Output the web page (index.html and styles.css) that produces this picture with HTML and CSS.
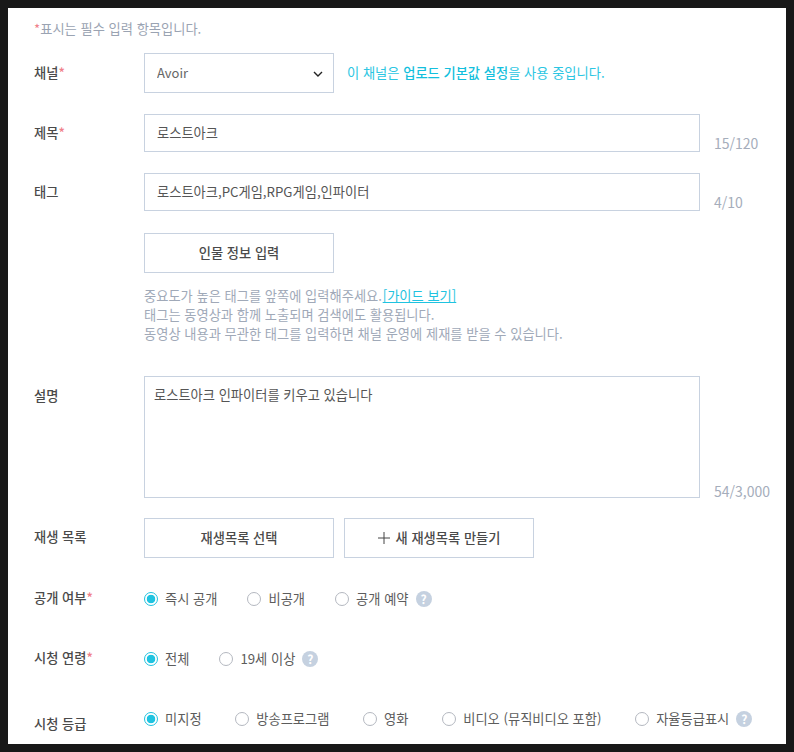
FILE: index.html
```html
<!DOCTYPE html>
<html lang="ko">
<head>
<meta charset="utf-8">
<title>동영상 업로드</title>
<link rel="stylesheet" href="styles.css">
</head>
<body>
<main class="panel">
  <p class="note"><span class="star">*</span>표시는 필수 입력 항목입니다.</p>

  <div class="row row-channel">
    <div class="label">채널<span class="star">*</span></div>
    <div class="select-wrap">
      <select class="select"><option>Avoir</option></select>
      <svg class="chevron" viewBox="0 0 10 6" aria-hidden="true"><path d="M1 1l4 4 4-4" fill="none" stroke="#222" stroke-width="1.4"/></svg>
    </div>
    <p class="channel-note">이 채널은 <strong class="strong">업로드 기본값 설정</strong>을 사용 중입니다.</p>
  </div>

  <div class="row row-title">
    <div class="label">제목<span class="star">*</span></div>
    <input class="input" type="text" value="로스트아크">
    <span class="count">15/120</span>
  </div>

  <div class="row row-tag">
    <div class="label">태그</div>
    <input class="input" type="text" value="로스트아크,PC게임,RPG게임,인파이터">
    <span class="count">4/10</span>
  </div>

  <div class="row row-person">
    <div class="label"></div>
    <button class="btn" type="button">인물 정보 입력</button>
  </div>

  <div class="row row-help">
    <div class="label"></div>
    <p class="help">중요도가 높은 태그를 앞쪽에 입력해주세요. <a class="link" href="#">[가이드 보기]</a><br>태그는 동영상과 함께 노출되며 검색에도 활용됩니다.<br>동영상 내용과 무관한 태그를 입력하면 채널 운영에 제재를 받을 수 있습니다.</p>
  </div>

  <div class="row row-desc">
    <div class="label label-desc">설명</div>
    <textarea class="textarea">로스트아크 인파이터를 키우고 있습니다</textarea>
    <span class="count count-desc">54/3,000</span>
  </div>

  <div class="row row-list">
    <div class="label label-up">재생 목록</div>
    <div class="btn-group">
      <button class="btn" type="button">재생목록 선택</button>
      <button class="btn" type="button"><svg class="plus" viewBox="0 0 12 12" aria-hidden="true"><path d="M6 0v12M0 6h12" stroke="#444" stroke-width="1"/></svg>새 재생목록 만들기</button>
    </div>
  </div>

  <div class="row row-radio">
    <div class="label label-up">공개 여부<span class="star">*</span></div>
    <div class="radios">
      <label class="radio"><input class="radio-input" type="radio" name="open" checked><span class="radio-text">즉시 공개</span></label>
      <label class="radio"><input class="radio-input" type="radio" name="open"><span class="radio-text">비공개</span></label>
      <label class="radio"><input class="radio-input" type="radio" name="open"><span class="radio-text">공개 예약</span><span class="help-icon">?</span></label>
    </div>
  </div>

  <div class="row row-radio">
    <div class="label label-up">시청 연령<span class="star">*</span></div>
    <div class="radios">
      <label class="radio"><input class="radio-input" type="radio" name="age" checked><span class="radio-text">전체</span></label>
      <label class="radio"><input class="radio-input" type="radio" name="age"><span class="radio-text">19세 이상</span><span class="help-icon">?</span></label>
    </div>
  </div>

  <div class="row row-radio row-rating">
    <div class="label label-rating">시청 등급</div>
    <div class="radios radios-wide">
      <label class="radio"><input class="radio-input" type="radio" name="rate" checked><span class="radio-text">미지정</span></label>
      <label class="radio"><input class="radio-input" type="radio" name="rate"><span class="radio-text">방송프로그램</span></label>
      <label class="radio"><input class="radio-input" type="radio" name="rate"><span class="radio-text">영화</span></label>
      <label class="radio"><input class="radio-input" type="radio" name="rate"><span class="radio-text">비디오 (뮤직비디오 포함)</span></label>
      <label class="radio"><input class="radio-input" type="radio" name="rate"><span class="radio-text">자율등급표시</span><span class="help-icon">?</span></label>
    </div>
  </div>
</main>
</body>
</html>
```
FILE: styles.css
```css
html, body {
  margin: 0;
  height: 752px;
  overflow: hidden;
  background: #181818;
}
body {
  padding: 8px;
  box-sizing: border-box;
  font-family: "Noto Sans CJK KR", "Noto Sans", sans-serif;
  font-size: 13.25px;
  color: #444;
}
.panel {
  width: 778px;
  height: 736px;
  box-sizing: border-box;
  background: #fff;
  padding: 11px 0 0 26px;
  overflow: hidden;
}
.note {
  margin: 0 0 14px;
  height: 20px;
  line-height: 20px;
  color: #9aa3b2;
}
.star { color: #f0808a; }
.row {
  display: flex;
  align-items: center;
}
.label {
  width: 110px;
  flex: none;
  box-sizing: border-box;
  padding-bottom: 2px;
  color: #4a4a4a;
  font-weight: 500;
}
.label-up { padding-bottom: 4px; }
.row-channel { height: 40px; margin-bottom: 21px; }
.row-title { height: 38px; margin-bottom: 21px; }
.row-tag { height: 38px; margin-bottom: 22px; }
.row-person { height: 40px; margin-bottom: 13px; }
.row-help { align-items: flex-start; margin-bottom: 33px; }
.row-desc { align-items: flex-start; margin-bottom: 20px; }
.row-list { height: 40px; margin-bottom: 31px; }
.row-radio { height: 20px; margin-bottom: 40px; }
.select-wrap {
  position: relative;
  width: 190px;
  height: 40px;
}
.select {
  appearance: none;
  width: 100%;
  height: 100%;
  padding: 0 12px 2px;
  background: #fff;
  border: 1px solid #c8d2e0;
  border-radius: 0;
  font: inherit;
  font-size: 13px;
  color: #666;
}
.chevron {
  position: absolute;
  top: 18px;
  right: 11px;
  width: 10px;
  height: 6px;
}
.channel-note {
  margin: 0 0 2px 13px;
  color: #2cc6e2;
}
.strong { font-weight: 500; color: #14bfdd; }
.input {
  width: 556px;
  height: 38px;
  box-sizing: border-box;
  padding: 0 12px 2px;
  border: 1px solid #c8d2e0;
  border-radius: 0;
  font: inherit;
  color: #555;
  outline: none;
}
.count {
  align-self: flex-end;
  margin-left: 14px;
  font-size: 14px;
  line-height: 18px;
  color: #a5adbb;
}
.count-desc { margin-bottom: -2px; }
.btn {
  width: 190px;
  height: 40px;
  padding: 0 0 2px;
  background: #fff;
  border: 1px solid #c8d2e0;
  border-radius: 0;
  font: inherit;
  font-weight: 500;
  color: #4a4a4a;
}
.btn-group {
  display: flex;
  gap: 10px;
}
.plus {
  width: 12px;
  height: 12px;
  margin-right: 6px;
  vertical-align: -1px;
}
.help {
  margin: 0;
  line-height: 19px;
  color: #a0a9b8;
}
.link {
  margin-left: -3px;
  color: #1fc3e0;
  text-decoration: underline;
}
.label-desc {
  padding-top: 10px;
}
.textarea {
  display: block;
  width: 556px;
  height: 122px;
  box-sizing: border-box;
  padding: 8px 9px 9px;
  border: 1px solid #c8d2e0;
  border-radius: 0;
  font: inherit;
  line-height: 19px;
  color: #555;
  resize: none;
  outline: none;
}
.radios {
  display: flex;
  gap: 30px;
}
.radios-wide { gap: 33.7px; }
.radio {
  display: flex;
  align-items: center;
  height: 20px;
  color: #5c5c5c;
}
.radio-text { padding-bottom: 2px; }
.radio-input {
  appearance: none;
  flex: none;
  width: 14px;
  height: 14px;
  margin: 0 7px 0 0;
  border: 1px solid #b4b8c0;
  border-radius: 50%;
  box-sizing: border-box;
  background: #fff;
}
.radio-input:checked {
  border-color: #1fc3e0;
  background: radial-gradient(circle, #1fc3e0 0 4px, #fff 4.6px);
}
.help-icon {
  width: 16px;
  height: 16px;
  margin-left: 7px;
  border-radius: 50%;
  background: #c5d1e0;
  color: #fff;
  font-size: 12px;
  font-weight: 700;
  line-height: 16px;
  text-align: center;
}
.row-rating { align-items: flex-start; }
.label-rating { padding: 5px 0 0; }
```
